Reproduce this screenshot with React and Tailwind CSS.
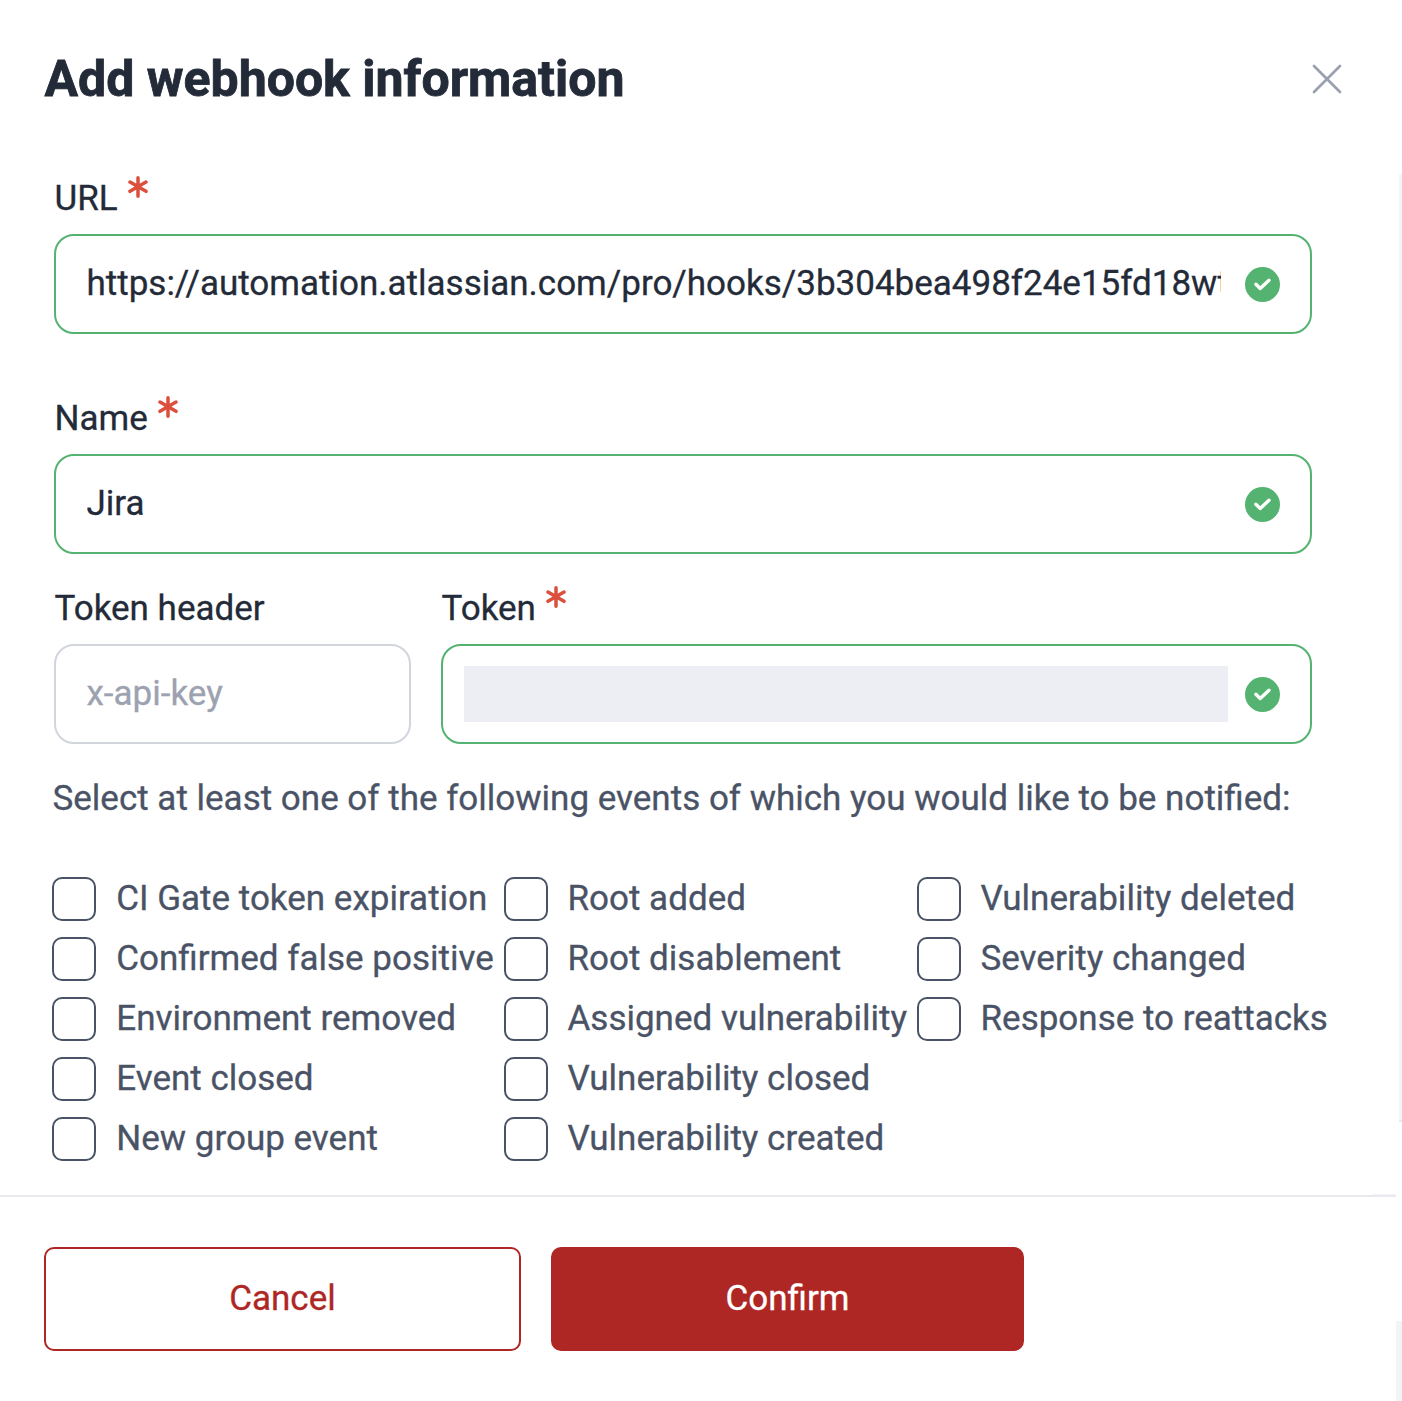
import { useState } from 'react';

const EVENT_COLUMNS = [
  {
    width: 'w-[452px]',
    labelGap: 'ml-[20.25px]',
    events: [
      'CI Gate token expiration',
      'Confirmed false positive',
      'Environment removed',
      'Event closed',
      'New group event',
    ],
  },
  {
    width: 'w-[413px]',
    labelGap: 'ml-[19.5px]',
    events: [
      'Root added',
      'Root disablement',
      'Assigned vulnerability',
      'Vulnerability closed',
      'Vulnerability created',
    ],
  },
  {
    width: 'w-[430px]',
    labelGap: 'ml-[19.5px]',
    events: ['Vulnerability deleted', 'Severity changed', 'Response to reattacks'],
  },
];

function Asterisk() {
  return (
    <svg width="20" height="22" viewBox="0 0 20 22" className="ml-2.5 mt-[3.5px] shrink-0" fill="none" stroke="#dc4f3d" strokeWidth="3.5" strokeLinecap="round">
      <path d="M10 1.8v18.4M2 6.1l16 9.2M18 6.1L2 15.3" />
    </svg>
  );
}

function CheckBadge() {
  return (
    <svg width="35" height="35" viewBox="0 0 35 35" className="shrink-0">
      <circle cx="17.5" cy="17.5" r="17.5" fill="#54b371" />
      <path d="M10.9 17.3l4.3 4.2 8.8-8.3" fill="none" stroke="#fff" strokeWidth="3.4" strokeLinecap="round" strokeLinejoin="round" />
    </svg>
  );
}

function Field({ label, required, valid, className = '', children }) {
  return (
    <div className={className}>
      <div className="flex h-[50px] items-start pl-[0.5px] text-[35px] text-[#232a38]">
        <span className="pt-0.5 leading-[50px]">{label}</span>
        {required && <Asterisk />}
      </div>
      <div
        className={`mt-3 flex h-[100px] items-center rounded-[20px] border-2 pl-[30px] pr-[30px] ${
          valid ? 'border-[#54b371]' : 'border-[#d2d5dc]'
        }`}
      >
        {children}
        {valid && <CheckBadge />}
      </div>
    </div>
  );
}

function EventCheckbox({ label, gap, checked, onChange }) {
  return (
    <label className="flex h-[60px] items-center">
      <input
        type="checkbox"
        checked={checked}
        onChange={onChange}
        className="size-11 shrink-0 appearance-none rounded-[10px] border-2 border-[#4a5366] checked:bg-[#4a5366]"
      />
      <span className={`${gap} whitespace-nowrap text-[35px] leading-[50px]`}>{label}</span>
    </label>
  );
}

export default function App() {
  const [url, setUrl] = useState('https://automation.atlassian.com/pro/hooks/3b304bea498f24e15fd18wt');
  const [name, setName] = useState('Jira');
  const [selected, setSelected] = useState([]);

  const toggle = (event) => {
    setSelected((prev) => (prev.includes(event) ? prev.filter((e) => e !== event) : [...prev, event]));
  };

  return (
    <div className="flex h-[1401px] w-[1402px] overflow-hidden bg-white font-['Roboto',sans-serif] [-webkit-text-stroke:0.3px]">
      <div className="w-[1396px] shrink-0">
        {/* Header */}
        <div className="flex h-[172px] items-start justify-between pl-[44.5px] pr-[54px] pt-[49px]">
          <h2 className="text-[50px] font-bold leading-[60px] text-[#232a38] [-webkit-text-stroke:0.8px]">
            Add webhook information
          </h2>
          <button className="mt-[15px]">
            <svg width="30" height="30" viewBox="0 0 30 30" fill="none" stroke="#9aa0af" strokeWidth="2.7" strokeLinecap="round">
              <path d="M2 2l26 26M28 2L2 28" />
            </svg>
          </button>
        </div>

        {/* Form */}
        <div className="h-[1022px] pl-[54px]">
          <Field label="URL" required valid className="w-[1258px]">
            <input
              value={url}
              onChange={(e) => setUrl(e.target.value)}
              className="mr-[24.5px] min-w-0 flex-1 pl-[0.5px] text-[35px] leading-[50px] text-[#232a38] outline-none"
            />
          </Field>
          <Field label="Name" required valid className="mt-[58px] w-[1258px]">
            <input
              value={name}
              onChange={(e) => setName(e.target.value)}
              className="mr-[24.5px] min-w-0 flex-1 pl-[0.5px] text-[35px] leading-[50px] text-[#232a38] outline-none"
            />
          </Field>
          <div className="mt-7 flex gap-[30px]">
            <Field label="Token header" className="w-[357px]">
              <input
                placeholder="x-api-key"
                className="min-w-0 flex-1 pl-[0.5px] text-[35px] leading-[50px] outline-none placeholder:text-[#9ca2b0]"
              />
            </Field>
            <Field label="Token" required valid className="w-[871px]">
              <div className="-ml-[9px] mr-[17px] h-14 flex-1 bg-[#edeef3]" />
            </Field>
          </div>

          <div className="-ml-0.5 text-[#4a5366]">
            <p className="mt-[30px] pl-[0.5px] text-[35px] leading-[50px]">
              Select at least one of the following events of which you would like to be notified:
            </p>
            <div className="mt-[45px] flex">
              {EVENT_COLUMNS.map((column, i) => (
                <div key={i} className={`${column.width} shrink-0`}>
                  {column.events.map((event) => (
                    <EventCheckbox
                      key={event}
                      label={event}
                      gap={column.labelGap}
                      checked={selected.includes(event)}
                      onChange={() => toggle(event)}
                    />
                  ))}
                </div>
              ))}
            </div>
          </div>
        </div>

        {/* Footer */}
        <div className="ml-auto h-px w-6 bg-[#f4f4f6]" />
        <div className="flex gap-[30px] border-t-2 border-[#e9eaee] pl-11 pt-[50px]">
          <button className="h-[104px] w-[477px] rounded-[10px] border-2 border-[#ae2725] text-[35px] text-[#ae2725]">
            Cancel
          </button>
          <button className="h-[104px] w-[473px] rounded-[10px] bg-[#ae2725] text-[35px] text-white">
            Confirm
          </button>
        </div>
      </div>

      {/* Scroll track */}
      <div className="flex w-1.5 shrink-0 flex-col items-end pt-[174px]">
        <div className="h-[948px] w-[3px] border-b-2 border-[#e9eaee] bg-[#f5f5f6]" />
        <div className="mt-auto h-20 w-1.5 bg-[#f3f4f6]" />
      </div>
    </div>
  );
}
